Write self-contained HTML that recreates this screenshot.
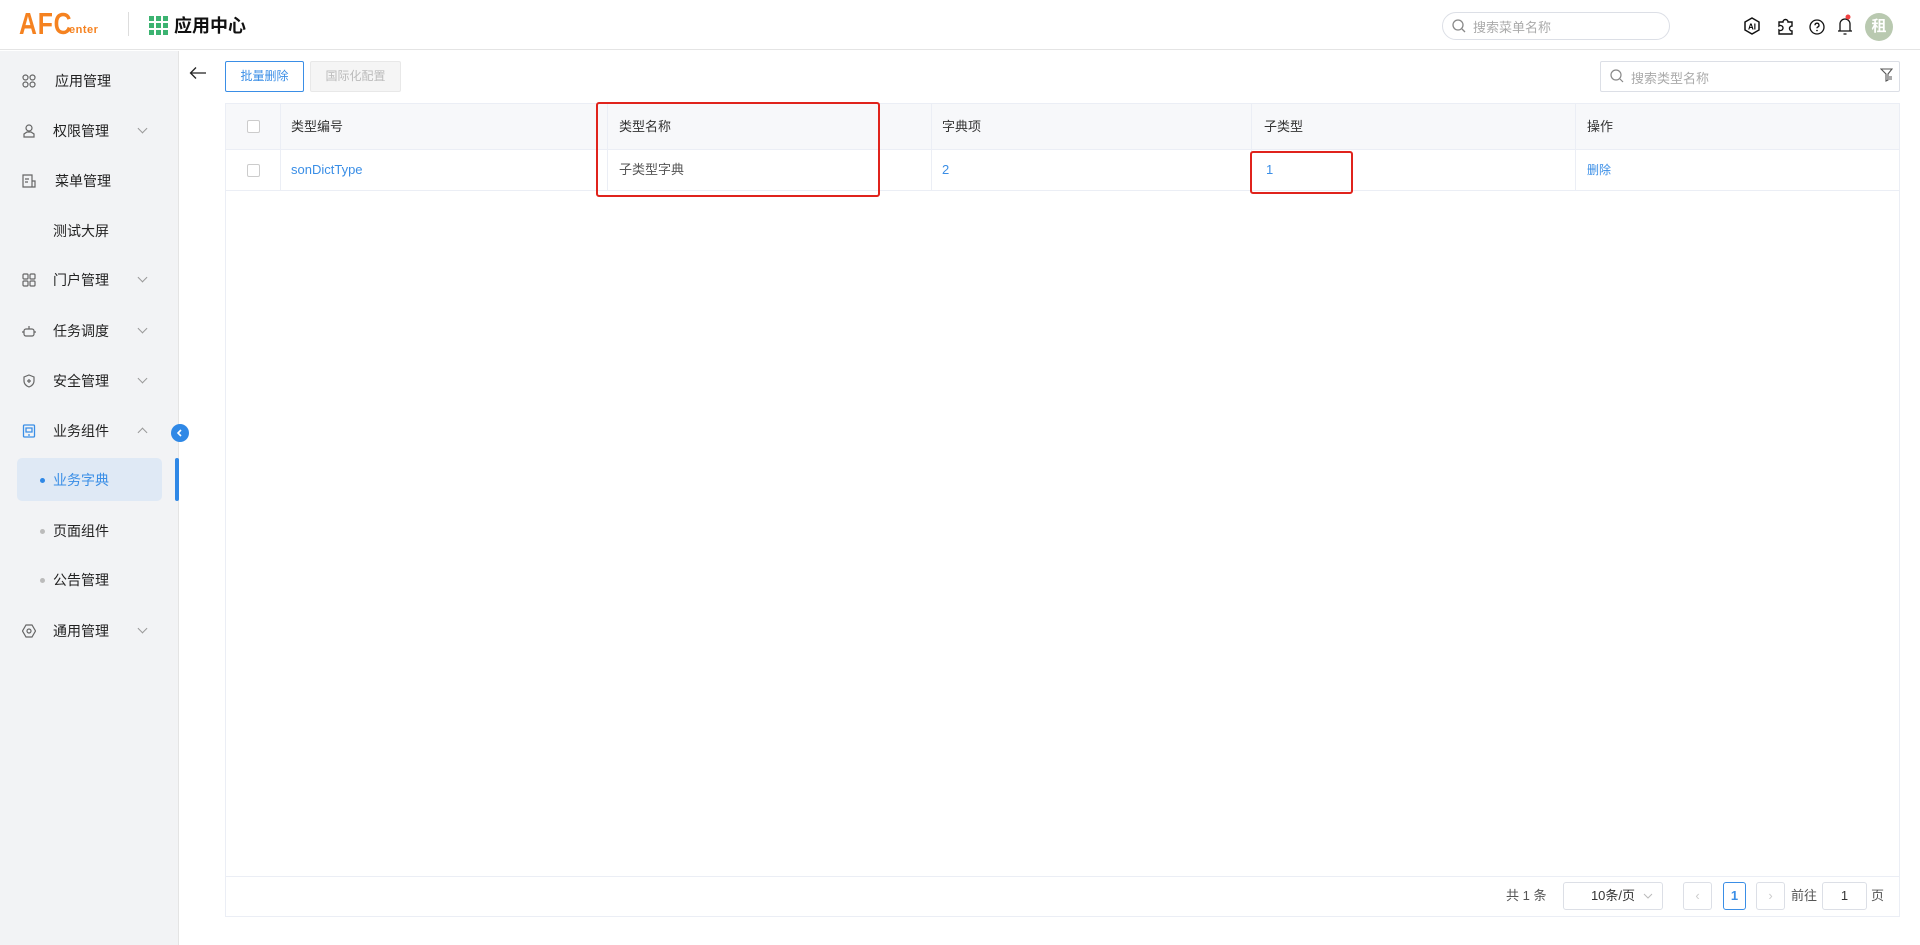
<!DOCTYPE html>
<html><head><meta charset="utf-8"><style>
*{box-sizing:border-box;margin:0;padding:0}
body{width:1920px;height:945px;overflow:hidden;background:#fff;font-family:"Liberation Sans","Noto Sans CJK SC",sans-serif;color:#333;position:relative}
.abs{position:absolute}
.hdr{left:0;top:0;width:1920px;height:50px;border-bottom:1px solid #e4e4e4;background:#fff}
.side{left:0;top:51px;width:179px;height:894px;background:#f2f3f5;border-right:1px solid #e4e4e4}
.mi{position:absolute;left:0;width:179px;height:40px;font-size:14px;color:#222;line-height:40px}
.mi .t{position:absolute;left:53px}
.mi .ic{position:absolute;left:22px;top:13px;width:14px;height:14px}
.mi .ch{position:absolute;left:139px;top:14px;width:7px;height:7px;border-right:1px solid #999;border-bottom:1px solid #999;transform:rotate(45deg)}
.dot{position:absolute;left:40px;top:18px;width:5px;height:5px;border-radius:50%;background:#bbb}
.btn{height:31px;border:1px solid #d9d9d9;font-size:12px;line-height:29px;text-align:center;border-radius:2px}
.th{position:absolute;top:0;height:46px;line-height:46px;font-size:13px;color:#333}
.td{position:absolute;top:46px;height:40px;line-height:40px;font-size:13px}
.vl{position:absolute;top:0;width:1px;height:86px;background:#ebeef5}
.cb{position:absolute;left:21px;width:13px;height:13px;border:1px solid #ccc;border-radius:2px;background:#fff}
.pg{border:1px solid #dcdfe6;border-radius:3px;height:28px;font-size:13px;line-height:26px;text-align:center;color:#333}
.pt{font-size:13px;color:#555;line-height:28px;top:882px}
</style></head><body>
<div class="abs hdr">
  <div class="abs" style="left:19px;top:8px;font-size:31px;line-height:32px;font-weight:bold;color:#f58220;transform:scaleX(0.8);transform-origin:left;letter-spacing:1px">AFC</div>
  <div class="abs" style="left:69px;top:24px;font-size:11px;line-height:12px;font-weight:bold;color:#f58220;letter-spacing:0.5px">enter</div>
  <div class="abs" style="left:128px;top:12px;width:1px;height:24px;background:#ddd"></div>
  <svg class="abs" style="left:149px;top:16px" width="19" height="19" viewBox="0 0 19 19"><g fill="#3cb371"><rect x="0" y="0" width="5" height="5"/><rect x="7" y="0" width="5" height="5"/><rect x="14" y="0" width="5" height="5"/><rect x="0" y="7" width="5" height="5"/><rect x="7" y="7" width="5" height="5"/><rect x="14" y="7" width="5" height="5"/><rect x="0" y="14" width="5" height="5"/><rect x="7" y="14" width="5" height="5"/><rect x="14" y="14" width="5" height="5"/></g></svg>
  <div class="abs" style="left:174px;top:12px;font-size:18px;font-weight:bold;color:#111">应用中心</div>
  <div class="abs" style="left:1442px;top:12px;width:228px;height:28px;border:1px solid #dcdfe6;border-radius:14px"></div>
  <svg class="abs" style="left:1452px;top:19px" width="14" height="14"><circle cx="6" cy="6" r="5" fill="none" stroke="#888" stroke-width="1.3"/><path d="M10 10l3 3" stroke="#888" stroke-width="1.3"/></svg>
  <div class="abs" style="left:1473px;top:17px;font-size:13px;color:#aaa">搜索菜单名称</div>
  <svg class="abs" style="left:1743px;top:17px" width="18" height="18" viewBox="0 0 18 18"><path d="M9 1l7 4v8l-7 4-7-4V5z" fill="none" stroke="#111" stroke-width="1.5"/><text x="9" y="12.5" font-size="8" font-weight="bold" text-anchor="middle" font-family="Liberation Sans">AI</text></svg>
  <svg class="abs" style="left:1776px;top:16px" width="19" height="19" viewBox="0 0 19 19"><path d="M3 6h4a2.5 2.5 0 1 1 5 0h4v4a2.5 2.5 0 1 0 0 5v3H3v-4a2.5 2.5 0 1 0 0-4z" fill="none" stroke="#111" stroke-width="1.4"/></svg>
  <svg class="abs" style="left:1809px;top:19px" width="16" height="16" viewBox="0 0 16 16"><circle cx="8" cy="8" r="7" fill="none" stroke="#111" stroke-width="1.3"/><path d="M6 6.2a2 2 0 1 1 2.6 1.9c-.5.2-.6.6-.6 1.2" fill="none" stroke="#111" stroke-width="1.3"/><circle cx="8" cy="11.5" r=".8"/></svg>
  <svg class="abs" style="left:1836px;top:14px" width="18" height="22" viewBox="0 0 18 22"><path d="M4 17V10a5 5 0 0 1 10 0v7M2 17h14M7.5 20h3" fill="none" stroke="#111" stroke-width="1.3"/><circle cx="12" cy="3" r="2.5" fill="#f04040"/></svg>
  <div class="abs" style="left:1865px;top:13px;width:28px;height:28px;border-radius:50%;background:#b9c9b0;color:#fff;font-size:15px;font-weight:bold;text-align:center;line-height:28px">租</div>
</div>

<div class="abs side">
  <div class="mi" style="top:10px"><svg class="ic" viewBox="0 0 14 14"><g fill="none" stroke="#666" stroke-width="1.2"><circle cx="3.5" cy="3.5" r="2.5"/><circle cx="10.5" cy="3.5" r="2.5"/><circle cx="3.5" cy="10.5" r="2.5"/><circle cx="10.5" cy="10.5" r="2.5"/></g></svg><span class="t" style="left:55px">应用管理</span></div>
  <div class="mi" style="top:60px"><svg class="ic" viewBox="0 0 14 14"><g fill="none" stroke="#666" stroke-width="1.2"><circle cx="7" cy="4" r="3"/><path d="M2 13v-3l3-2h4l3 2v3z"/></g></svg><span class="t">权限管理</span><span class="ch"></span></div>
  <div class="mi" style="top:110px"><svg class="ic" viewBox="0 0 14 14"><g fill="none" stroke="#666" stroke-width="1.2"><path d="M1 1h9v12H1zM10 7h3v6h-3M3 5h4M3 8h3"/></g></svg><span class="t" style="left:55px">菜单管理</span></div>
  <div class="mi" style="top:160px"><span class="t">测试大屏</span></div>
  <div class="mi" style="top:209px"><svg class="ic" viewBox="0 0 14 14"><g fill="none" stroke="#666" stroke-width="1.2"><rect x="1" y="1" width="5" height="5" rx="1"/><rect x="8" y="1" width="5" height="5" rx="1"/><rect x="1" y="8" width="5" height="5" rx="1"/><rect x="8" y="8" width="5" height="5" rx="1"/></g></svg><span class="t">门户管理</span><span class="ch"></span></div>
  <div class="mi" style="top:260px"><svg class="ic" viewBox="0 0 14 14"><g fill="none" stroke="#666" stroke-width="1.2"><rect x="2" y="5" width="10" height="7" rx="2"/><path d="M7 5V2M0 8h2M12 8h2"/></g></svg><span class="t">任务调度</span><span class="ch"></span></div>
  <div class="mi" style="top:310px"><svg class="ic" viewBox="0 0 14 14"><g fill="none" stroke="#666" stroke-width="1.2"><path d="M7 1l5 2v4c0 3-2.5 5-5 6-2.5-1-5-3-5-6V3z"/><path d="M5 7h4M7 5v4"/></g></svg><span class="t">安全管理</span><span class="ch"></span></div>
  <div class="mi" style="top:360px"><svg class="ic" viewBox="0 0 14 14"><g fill="none" stroke="#3a8ee6" stroke-width="1.3"><rect x="1.5" y="1" width="11" height="12" rx="1"/><path d="M4 4h6v4H4zM6 11h2"/></g></svg><span class="t">业务组件</span><span class="ch" style="top:18px;transform:rotate(225deg)"></span></div>
  <div class="abs" style="left:17px;top:407px;width:145px;height:43px;background:#dfe9f5;border-radius:5px"></div>
  <div class="abs" style="left:175px;top:407px;width:4px;height:43px;background:#2f88e6;border-radius:2px"></div>
  <div class="mi" style="top:409px;color:#3a8ee6"><span class="dot" style="background:#2f88e6"></span><span class="t">业务字典</span></div>
  <div class="mi" style="top:460px"><span class="dot"></span><span class="t">页面组件</span></div>
  <div class="mi" style="top:509px"><span class="dot"></span><span class="t">公告管理</span></div>
  <div class="mi" style="top:560px"><svg class="ic" viewBox="0 0 14 14"><g fill="none" stroke="#666" stroke-width="1.2"><path d="M4 1h6l3.5 6-3.5 6H4L.5 7z"/><circle cx="7" cy="7" r="2"/></g></svg><span class="t">通用管理</span><span class="ch"></span></div>
</div>
<div class="abs" style="left:171px;top:424px;width:18px;height:18px;border-radius:50%;background:#2f88e6"></div>
<svg class="abs" style="left:175px;top:428px" width="10" height="10"><path d="M6 2L3 5l3 3" fill="none" stroke="#fff" stroke-width="1.6"/></svg>

<svg class="abs" style="left:189px;top:66px" width="18" height="14"><path d="M17 7H2M7 1.5L1.5 7 7 12.5" fill="none" stroke="#222" stroke-width="1.3"/></svg>
<div class="abs btn" style="left:225px;top:61px;width:79px;border-color:#3a8ee6;color:#3a8ee6">批量删除</div>
<div class="abs btn" style="left:310px;top:61px;width:91px;background:#f5f5f5;border-color:#e8e8e8;color:#bbb">国际化配置</div>
<div class="abs" style="left:1600px;top:61px;width:300px;height:31px;border:1px solid #dcdfe6;border-radius:2px"></div>
<svg class="abs" style="left:1610px;top:69px" width="14" height="14"><circle cx="6" cy="6" r="5" fill="none" stroke="#888" stroke-width="1.2"/><path d="M10 10l3 3" stroke="#888" stroke-width="1.2"/></svg>
<div class="abs" style="left:1631px;top:68px;font-size:13px;color:#aaa">搜索类型名称</div>
<svg class="abs" style="left:1880px;top:68px" width="13" height="14"><path d="M1 1h11L8 6v6l-2 1V6z M9 9h3M9 11h3" fill="none" stroke="#555" stroke-width="1.1"/></svg>

<div class="abs" style="left:225px;top:103px;width:1675px;height:814px;border:1px solid #ebeef5">
  <div class="abs" style="left:0;top:0;width:1673px;height:46px;background:#f7f8fa;border-bottom:1px solid #ebeef5"></div>
  <div class="abs" style="left:0;top:86px;width:1673px;height:1px;background:#ebeef5"></div>
  <div class="vl" style="left:54px"></div><div class="vl" style="left:381px"></div><div class="vl" style="left:705px"></div><div class="vl" style="left:1025px"></div><div class="vl" style="left:1349px"></div>
  <div class="cb" style="top:16px"></div><div class="cb" style="top:60px"></div>
  <div class="th" style="left:65px">类型编号</div><div class="th" style="left:393px">类型名称</div><div class="th" style="left:716px">字典项</div><div class="th" style="left:1038px">子类型</div><div class="th" style="left:1361px">操作</div>
  <div class="td" style="left:65px;color:#3a8ee6">sonDictType</div><div class="td" style="left:393px;color:#555">子类型字典</div><div class="td" style="left:716px;color:#3a8ee6">2</div><div class="td" style="left:1040px;color:#3a8ee6">1</div><div class="td" style="left:1361px;color:#3a8ee6;font-size:12px">删除</div>
  <div class="abs" style="left:0;top:772px;width:1673px;height:1px;background:#ebeef5"></div>
</div>
<div class="abs" style="left:596px;top:102px;width:284px;height:95px;border:2px solid #e0231c;border-radius:3px"></div>
<div class="abs" style="left:1250px;top:151px;width:103px;height:43px;border:2px solid #e0231c;border-radius:3px"></div>

<div class="abs pt" style="left:1506px">共 1 条</div>
<div class="abs pg" style="left:1563px;top:882px;width:100px">10条/页</div>
<svg class="abs" style="left:1643px;top:892px" width="10" height="8"><path d="M1 2l4 4 4-4" fill="none" stroke="#bbb"/></svg>
<div class="abs pg" style="left:1683px;top:882px;width:29px;color:#ccc">‹</div>
<div class="abs pg" style="left:1723px;top:882px;width:23px;border-color:#3a8ee6;color:#3a8ee6;font-weight:bold">1</div>
<div class="abs pg" style="left:1756px;top:882px;width:29px;color:#ccc">›</div>
<div class="abs pt" style="left:1791px">前往</div>
<div class="abs pg" style="left:1822px;top:882px;width:45px">1</div>
<div class="abs pt" style="left:1871px">页</div>
</body></html>
